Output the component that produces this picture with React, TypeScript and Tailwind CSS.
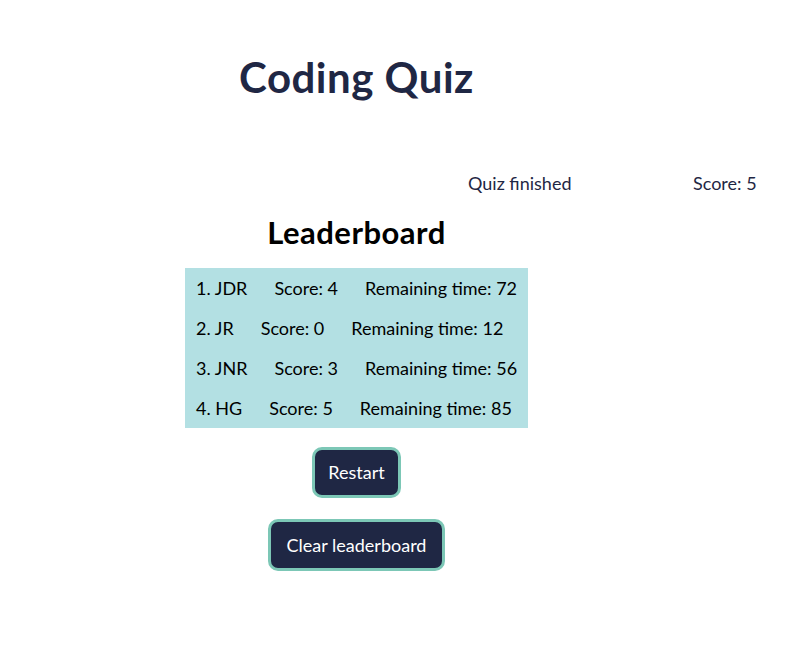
import React from 'react';

interface Entry {
  rank: number;
  initials: string;
  score: number;
  time: number;
}

const entries: Entry[] = [
  { rank: 1, initials: 'JDR', score: 4, time: 72 },
  { rank: 2, initials: 'JR', score: 0, time: 12 },
  { rank: 3, initials: 'JNR', score: 3, time: 56 },
  { rank: 4, initials: 'HG', score: 5, time: 85 },
];

export default function App() {
  return (
    <div
      className="min-h-screen w-[808px] bg-white text-[#1f2744]"
      style={{ fontFamily: '"Gill Sans", Lato, "Liberation Sans", sans-serif' }}
    >
      {/* Header */}
      <header className="w-[713px] pt-[52px] text-center">
        <h1 className="text-[42px] font-bold leading-[50px] tracking-[0.5px]">Coding Quiz</h1>
      </header>

      {/* Status row */}
      <div className="mt-[68px] flex pl-[468px] text-[18px] leading-[26px]">
        <span className="w-[225px] whitespace-nowrap">Quiz finished</span>
        <span className="whitespace-nowrap">Score: 5</span>
      </div>

      {/* Leaderboard */}
      <section className="flex w-[713px] flex-col items-center">
        <h2 className="mt-[18px] text-[31px] font-bold leading-[36px] tracking-[0.5px] text-black">Leaderboard</h2>
        <ol className="mt-[18px] w-[343px] bg-[#b3e0e3] px-[11px] text-[18px] text-black">
          {entries.map((e) => (
            <li key={e.rank} className="flex h-[40px] items-center gap-[27px] whitespace-nowrap">
              <span className="shrink-0">
                {e.rank}. {e.initials}
              </span>
              <span className="shrink-0">Score: {e.score}</span>
              <span className="shrink-0">Remaining time: {e.time}</span>
            </li>
          ))}
        </ol>

        <button className="mt-[19px] h-[51px] rounded-[10px] border-[3px] border-[#7cc7b6] bg-[#1f2744] px-[13px] text-[18px] text-white">
          Restart
        </button>
        <button className="mt-[21px] h-[52px] rounded-[10px] border-[3px] border-[#7cc7b6] bg-[#1f2744] px-[16px] text-[18px] text-white">
          Clear leaderboard
        </button>
      </section>
    </div>
  );
}
